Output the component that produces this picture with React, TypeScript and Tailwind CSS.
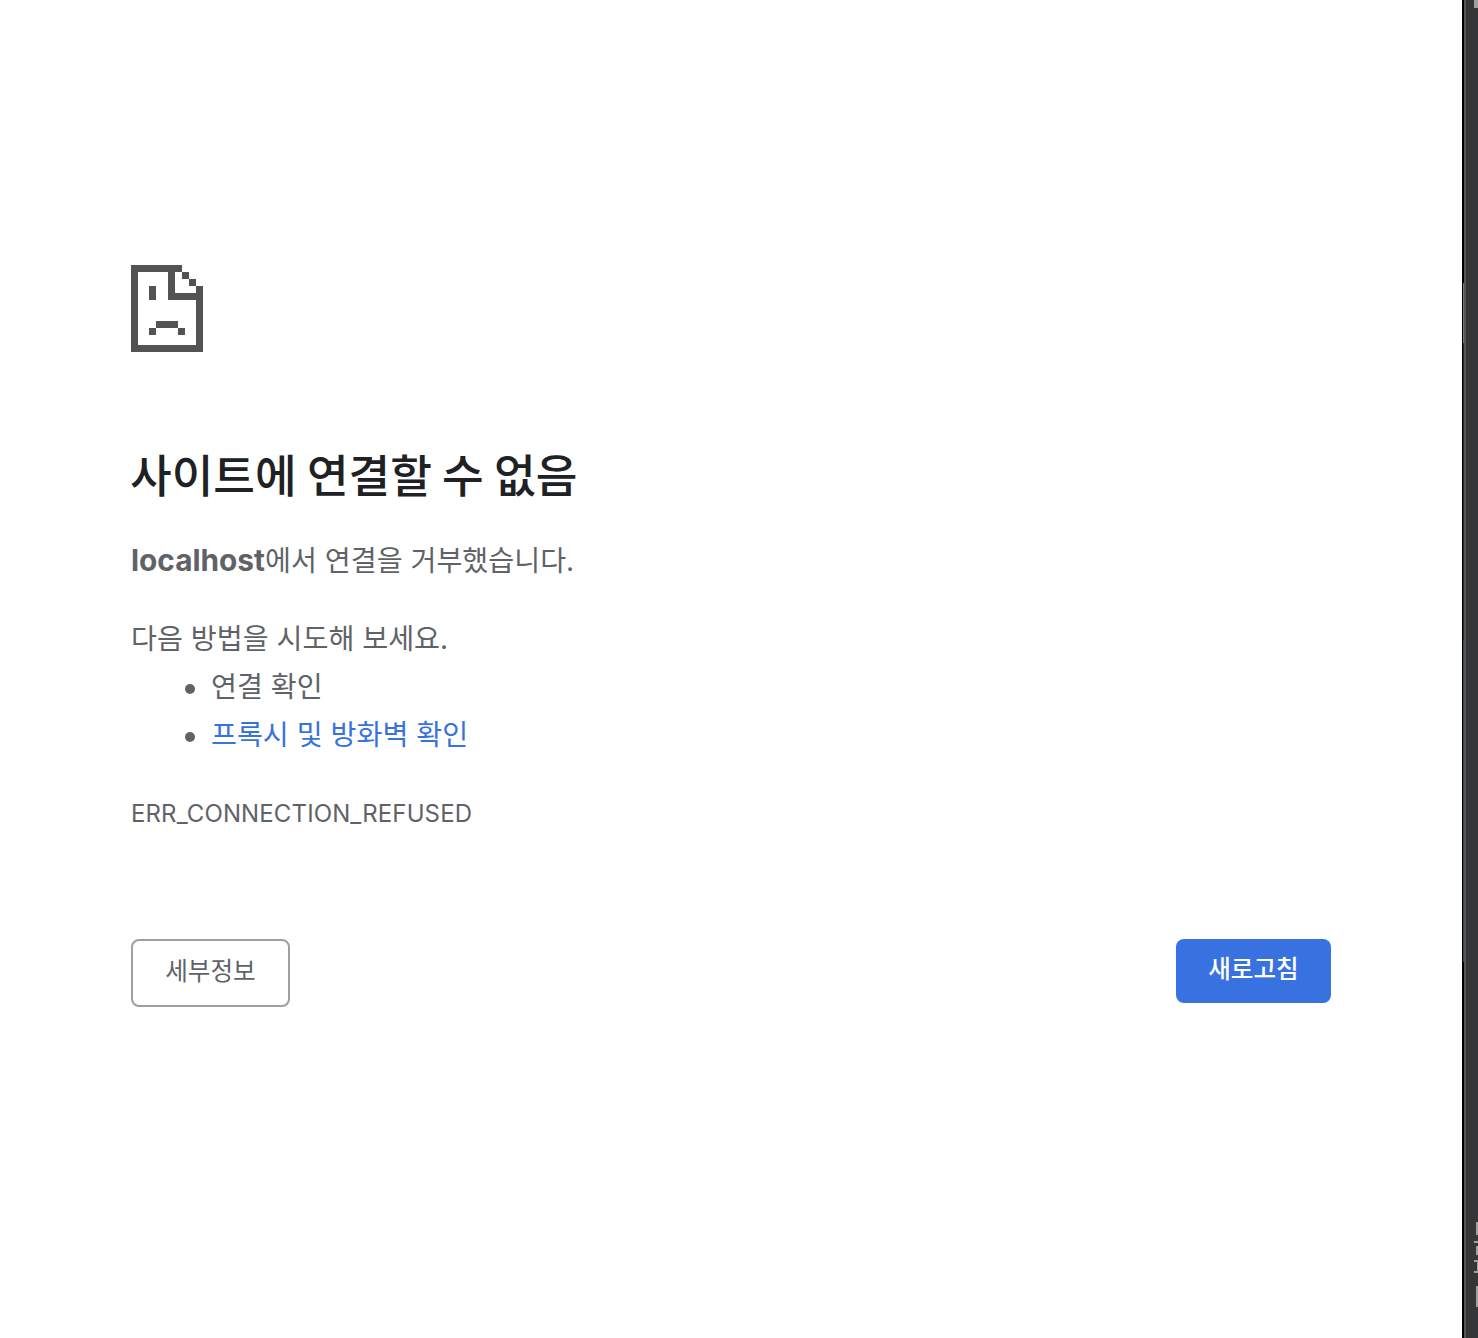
import React from 'react';

const SadPageIcon: React.FC = () => (
  <svg width="72" height="87" viewBox="0 0 72 87" fill="#535353" shapeRendering="crispEdges" className="block">
    {/* Page outline */}
    <path d="M0 0h51v7H44v21h21V21h7v66H0zM7 7v73h58V35H37V7z" />
    {/* Folded corner */}
    <path d="M51 7h7v7h-7zM58 14h7v7h-7z" />
    {/* Face */}
    <path d="M18 21h7v14h-7zM25 56h22v7H25zM18 63h7v7h-7zM47 63h7v7h-7z" />
  </svg>
);

const App: React.FC = () => {
  return (
    <div className="flex h-[1338px] w-[1478px] overflow-hidden bg-white font-['Inter','Noto_Sans_CJK_KR',sans-serif] text-[#5f6368]">
      <main className="w-[1462px] pt-[265px] pr-[131px] pl-[131px]">
        <SadPageIcon />

        <h1 className="mt-[91px] -ml-px font-['Noto_Sans_CJK_KR',sans-serif] text-[45.3px] leading-[60px] font-medium whitespace-nowrap text-[#202124]">
          사이트에 연결할 수 없음
        </h1>

        <p className="mt-[33px] text-[28.2px] leading-[48px] whitespace-nowrap">
          <strong className="text-[29.8px] font-bold">localhost</strong>에서 연결을 거부했습니다.
        </p>

        <div className="mt-[30px] text-[28.2px] leading-[48px] whitespace-nowrap">
          <p>다음 방법을 시도해 보세요.</p>
          <ul className="pl-[54px]">
            <li className="flex items-center gap-4">
              <span className="mt-1 size-2.5 rounded-full bg-[#5f6368]"></span>
              연결 확인
            </li>
            <li className="flex items-center gap-4">
              <span className="mt-1 size-2.5 rounded-full bg-[#5f6368]"></span>
              <a className="text-[#3871e0]">프록시 및 방화벽 확인</a>
            </li>
          </ul>
        </div>

        <p className="mt-[37px] text-[24px] leading-[36px] tracking-[0.12px]">ERR_CONNECTION_REFUSED</p>

        <div className="mt-[107px] flex items-start justify-between text-[24.6px]">
          <button className="h-[68px] w-[159px] rounded-[8px] border-2 border-[#9aa0a6] pb-1 leading-[60px]">세부정보</button>
          <button className="h-[64px] w-[155px] rounded-[8px] bg-[#3871e0] pb-1 leading-[60px] font-medium text-white">새로고침</button>
        </div>
      </main>

      {/* Edge of the neighbouring window */}
      <aside className="flex w-4">
        <div className="flex w-0.5 flex-col bg-black">
          <div className="mt-[283px] ml-px h-[60px] bg-[#777777]"></div>
          <div className="ml-px h-[297px] bg-[#2b2927]"></div>
          <div className="ml-px h-[322px] bg-[#33434d]"></div>
        </div>
        <div className="w-0.5 bg-[#545657]"></div>
        <div className="relative w-3 overflow-hidden bg-[#343637]">
          <div className="absolute top-0 right-0 h-2 w-1 bg-[#a0a0a0]"></div>
          <div className="absolute top-[1222px] right-0 h-[13px] w-0.5 bg-[#a0a0a0]"></div>
          <div className="absolute top-[1241px] right-0 h-0.5 w-1 bg-[#a0a0a0]"></div>
          <div className="absolute top-[1246px] right-0 h-[9px] w-0.5 bg-[#a0a0a0]"></div>
          <div className="absolute top-[1260px] right-0 h-0.5 w-1 bg-[#a0a0a0]"></div>
          <div className="absolute top-[1261px] right-0 h-3 w-px bg-[#a0a0a0]"></div>
          <div className="absolute top-[1271px] right-0 h-0.5 w-1 bg-[#a0a0a0]"></div>
          <div className="absolute top-[1286px] right-0 h-[21px] w-0.5 bg-[#a0a0a0]"></div>
        </div>
      </aside>
    </div>
  );
};

export default App;
